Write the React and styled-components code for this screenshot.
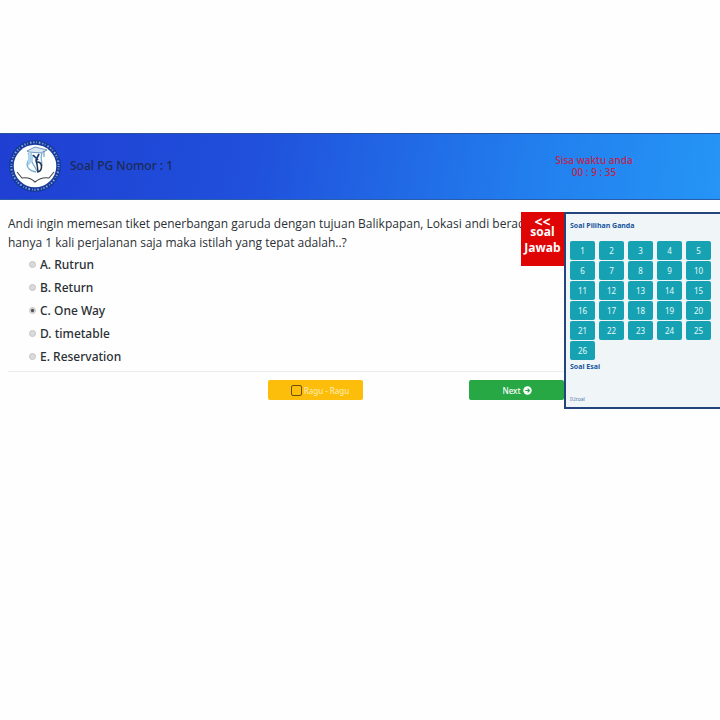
import React, { useState } from 'react';
import styled, { createGlobalStyle } from 'styled-components';

const GlobalStyle = createGlobalStyle`
  * { box-sizing: border-box; }
  body {
    margin: 0;
    background: #fefefe;
    color: #2b3035;
    font-family: "Noto Sans", "Open Sans", sans-serif;
    font-size: 12px;
  }
  button, input { font-family: inherit; }
`;

const Page = styled.div`
  padding-top: 133px;
  overflow-x: hidden;
`;

const Header = styled.header`
  display: flex;
  align-items: center;
  height: 67px;
  padding: 0 8px 2px;
  border-top: 1px solid #2a5298;
  border-bottom: 1px solid #2a5ea8;
  background: linear-gradient(100deg, #1f3fd2 0%, #2050dc 35%, #2280ee 75%, #2595f6 100%);
`;

const Logo = styled.svg`
  width: 54px;
  height: 54px;
  flex: none;
`;

const Title = styled.h1`
  flex: 1;
  margin: 0 0 0 8px;
  font-size: 12px;
  font-weight: 500;
  color: #1b2a55;
`;

const Timer = styled.div`
  width: 78px;
  margin-right: 79px;
  text-align: center;
  white-space: nowrap;
  font-size: 10px;
  line-height: 12px;
  font-weight: 500;
  color: #bd2450;
`;

const Content = styled.main`
  position: relative;
  padding: 14px 8px 40px;
`;

const Question = styled.p`
  margin: 0 189px 0 0;
  overflow: hidden;
  font-family: "Open Sans", "Noto Sans", sans-serif;
  line-height: 19px;
  white-space: nowrap;
`;

const Options = styled.fieldset`
  margin: 0;
  padding: 1px 0 3px 21px;
  border: 0;
`;

const Option = styled.label`
  display: flex;
  align-items: center;
  gap: 4px;
  width: max-content;
  height: 23px;
  font-weight: 500;
`;

const Radio = styled.input`
  appearance: none;
  width: 7px;
  height: 7px;
  margin: 0;
  border: 1px solid #c4c4c4;
  border-radius: 50%;
  background: #dadada;
  &:checked {
    background: radial-gradient(circle, #555 0 35%, #ddd 60%);
  }
`;

const Divider = styled.hr`
  margin: 0;
  border: 0;
  border-top: 1px solid #ececec;
`;

const Actions = styled.div`
  display: flex;
  gap: 106px;
  padding: 8px 0 0 37%;
`;

const actionBox = `
  display: flex;
  align-items: center;
  justify-content: center;
  width: 95px;
  height: 20px;
  padding: 0;
  border: 0;
  border-radius: 2px;
  font-size: 8px;
`;

const Doubt = styled.label`
  ${actionBox}
  gap: 2px;
  padding-left: 8px;
  background: #fcbd0b;
  color: #fff0bd;
`;

const Tick = styled.input`
  appearance: none;
  width: 11px;
  height: 11px;
  margin: 0;
  border: 1px solid #694f0c;
  border-radius: 2px;
  &:checked { background: #694f0c; }
`;

const Next = styled.button`
  ${actionBox}
  gap: 2px;
  background: #28a745;
  color: #fff;
  font-weight: 500;
`;

const Drawer = styled.aside`
  position: absolute;
  top: 12px;
  right: 0;
  display: flex;
  align-items: flex-start;
`;

const DrawerTab = styled.button`
  width: 43px;
  height: 54px;
  padding: 0 0 6px;
  border: 0;
  background: #e00505;
  color: #fff;
  font-family: "Open Sans", "Noto Sans", sans-serif;
  font-size: 12px;
  font-weight: 700;
  line-height: 16px;
`;

const Arrows = styled.span`
  display: block;
  height: 8px;
  font-size: 14px;
  line-height: 12px;
`;

const Panel = styled.div`
  width: 156px;
  height: 197px;
  padding: 7px 4px 0;
  border: 2px solid #24457c;
  border-right: 0;
  background: #f0f5f7;
`;

const PanelTitle = styled.h2`
  margin: 0;
  font-size: 7px;
  line-height: 10px;
  font-weight: 700;
  color: #17559c;
`;

const Numbers = styled.div`
  display: grid;
  grid-template-columns: repeat(5, 25px);
  gap: 1px 4px;
  margin: 10px 0 2px;
`;

const NumberButton = styled.button`
  height: 19px;
  padding: 0;
  border: 0;
  border-radius: 2px;
  background: #17a2b3;
  color: #e4fafa;
  font-size: 8px;
`;

const Footnote = styled.a`
  display: block;
  margin-top: 23px;
  font-size: 5px;
  line-height: 8px;
  color: #5277ac;
  text-decoration: none;
`;

const answers = ['A. Rutrun', 'B. Return', 'C. One Way', 'D. timetable', 'E. Reservation'];
const numbers = Array.from({ length: 26 }, (_, i) => i + 1);

function SchoolLogo() {
  return (
    <Logo viewBox="0 0 54 54" aria-hidden="true">
      <circle cx="27" cy="27" r="26" fill="#163a9b" />
      <circle cx="27" cy="27" r="23.7" fill="none" stroke="#86a5d6" strokeWidth="2" strokeDasharray="1.2 1.6 .7 2.2 1.6 1.8" />
      <circle cx="27" cy="27" r="21.3" fill="#fdfefe" />
      <path d="M19 12l8-4 12 3-6 3-12-1z" fill="#d7e8f3" stroke="#3b6fa6" strokeWidth=".7" />
      <path d="M20 14c3 3 0 8-1 11 0 5 4 7 9 8M23 14l1 9 5 9M34 14c-2 5 0 8 0 13" fill="none" stroke="#77add1" strokeWidth="1.3" />
      <path d="M20 15l6 1-2 7-4 4z" fill="#acd4ea" />
      <path d="M25 16l5 5M31 15l-3 6 1 4" fill="none" stroke="#173a73" strokeWidth="1.7" />
      <path d="M29 23c6 0 6 9 0 10M29 25l1 8" fill="none" stroke="#263452" strokeWidth="1.5" />
      <path d="M36 12v6" stroke="#3b6fa6" strokeWidth=".8" />
      <path d="M9 33l5 6c5-1 9 0 13 4 5-4 9-5 14-4l5-6" fill="none" stroke="#434247" strokeWidth="1.1" />
    </Logo>
  );
}

export default function App() {
  const [answer, setAnswer] = useState(answers[2]);
  return (
    <>
      <GlobalStyle />
      <Page>
        <Header>
          <SchoolLogo />
          <Title>Soal PG Nomor : 1</Title>
          <Timer>Sisa waktu anda<br />00 : 9 : 35</Timer>
        </Header>
        <Content>
          <Question>
            Andi ingin memesan tiket penerbangan garuda dengan tujuan Balikpapan, Lokasi andi berad<br />
            hanya 1 kali perjalanan saja maka istilah yang tepat adalah..?
          </Question>
          <Options>
            {answers.map((a) => (
              <Option key={a}>
                <Radio type="radio" name="answer" checked={answer === a} onChange={() => setAnswer(a)} />
                {a}
              </Option>
            ))}
          </Options>
          <Divider />
          <Actions>
            <Doubt><Tick type="checkbox" />Ragu - Ragu</Doubt>
            <Next type="button">
              Next
              <svg width="9" height="9" viewBox="0 0 9 9" aria-hidden="true">
                <circle cx="4.5" cy="4.5" r="4.2" fill="#fff" />
                <path d="M2.2 4.5h4M4.6 2.6l1.9 1.9-1.9 1.9" fill="none" stroke="#28a745" strokeWidth="1.1" />
              </svg>
            </Next>
          </Actions>
          <Drawer>
            <DrawerTab type="button"><Arrows>&lt;&lt;</Arrows>soal Jawab</DrawerTab>
            <Panel>
              <PanelTitle>Soal Pilihan Ganda</PanelTitle>
              <Numbers>
                {numbers.map((n) => <NumberButton type="button" key={n}>{n}</NumberButton>)}
              </Numbers>
              <PanelTitle>Soal Esai</PanelTitle>
              <Footnote href="#">IUzoal</Footnote>
            </Panel>
          </Drawer>
        </Content>
      </Page>
    </>
  );
}
